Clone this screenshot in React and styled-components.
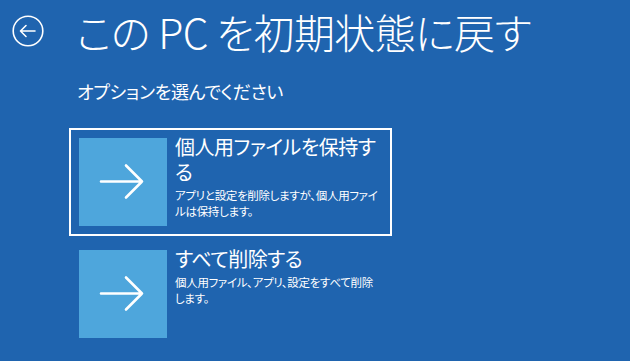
import React from "react";
import styled, { createGlobalStyle } from "styled-components";

const Global = createGlobalStyle`
  html, body { margin: 0; padding: 0; background: #1f64af; }
  body {
    width: 630px; height: 361px; overflow: hidden;
    font-family: "Noto Sans CJK JP", "Noto Sans", sans-serif;
    color: #ffffff;
    font-feature-settings: "palt";
  }
`;

const Page = styled.div`
  width: 630px;
  height: 361px;
  background: #1f64af;
  box-sizing: border-box;
  display: flex;
  flex-direction: column;
`;

const Header = styled.div`
  display: flex;
  align-items: center;
  height: 62px;
  padding-left: 12px;
  gap: 32px;
`;

const BackButton = styled.button`
  width: 32px;
  height: 32px;
  padding: 0;
  margin-top: -1px;
  border: none;
  background: transparent;
  display: flex;
  align-items: center;
  justify-content: center;
  cursor: pointer;
`;

const Title = styled.h1`
  margin: 0;
  font-size: 41px;
  font-weight: 300;
  letter-spacing: -0.6px;
  line-height: 1;
  white-space: nowrap;
`;

const Subtitle = styled.h2`
  margin: 17px 0 0 77px;
  font-size: 18px;
  font-weight: 400;
  letter-spacing: -0.3px;
  line-height: 24px;
`;

const Options = styled.div`
  display: flex;
  flex-direction: column;
  gap: 4px;
  margin: 25px 0 0 69px;
`;

const Card = styled.div`
  width: 323px;
  height: 108px;
  box-sizing: border-box;
  border: 2px solid ${(p) => (p.$selected ? "#ffffff" : "transparent")};
  padding: 8px;
  display: flex;
  gap: 8px;
`;

const Tile = styled.div`
  width: 88px;
  height: 88px;
  flex: none;
  background: #4ea6dc;
  display: flex;
  align-items: center;
  justify-content: center;
`;

const Texts = styled.div`
  flex: 1;
  min-width: 0;
  display: flex;
  flex-direction: column;
`;

const OptTitle = styled.div`
  font-size: 20px;
  letter-spacing: -0.5px;
  line-height: 25px;
  margin-top: -4px;
  font-weight: 400;
`;

const OptDesc = styled.div`
  font-size: 11.5px;
  letter-spacing: -0.3px;
  line-height: 16px;
  margin-top: 3px;
`;

const Arrow = () => (
  <svg width="48" height="40" viewBox="0 0 48 40" fill="none">
    <path
      d="M2 19.5 H43 M27 3.5 L43 19.5 L27 35.5"
      stroke="#fff"
      strokeWidth="2.6"
      strokeLinecap="round"
      strokeLinejoin="round"
    />
  </svg>
);

const BackIcon = () => (
  <svg width="32" height="32" viewBox="0 0 32 32" fill="none">
    <circle cx="16" cy="16" r="14.8" stroke="#fff" strokeWidth="1.6" />
    <path
      d="M8.5 16 H23 M14 10.5 L8.5 16 L14 21.5"
      stroke="#fff"
      strokeWidth="1.6"
      strokeLinecap="round"
      strokeLinejoin="round"
    />
  </svg>
);

const options = [
  {
    title: "個人用ファイルを保持する",
    desc: "アプリと設定を削除しますが、個人用ファイルは保持します。",
    selected: true,
  },
  {
    title: "すべて削除する",
    desc: "個人用ファイル、アプリ、設定をすべて削除します。",
    selected: false,
  },
];

export default function App() {
  return (
    <Page>
      <Global />
      <Header>
        <BackButton aria-label="戻る">
          <BackIcon />
        </BackButton>
        <Title>この PC を初期状態に戻す</Title>
      </Header>
      <Subtitle>オプションを選んでください</Subtitle>
      <Options>
        {options.map((o) => (
          <Card key={o.title} $selected={o.selected}>
            <Tile>
              <Arrow />
            </Tile>
            <Texts>
              <OptTitle>{o.title}</OptTitle>
              <OptDesc>{o.desc}</OptDesc>
            </Texts>
          </Card>
        ))}
      </Options>
    </Page>
  );
}
